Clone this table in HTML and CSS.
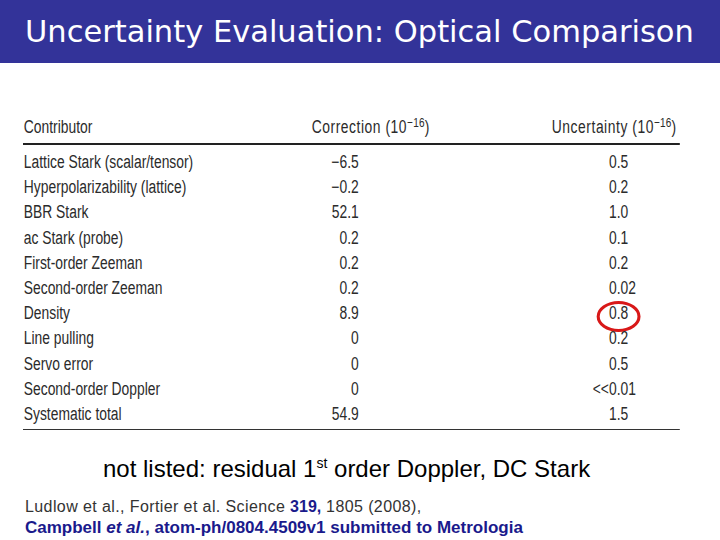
FILE: index.html
```html
<!DOCTYPE html>
<html>
<head>
<meta charset="utf-8">
<link rel="stylesheet" href="styles.css">
</head>
<body>
<header class="titlebar">
  <h1 class="title">Uncertainty Evaluation: Optical Comparison</h1>
</header>
<main class="content">
  <section class="table">
    <div class="row head">
      <div class="c1">Contributor</div>
      <div class="c2">Correction (10<sup>−16</sup>)</div>
      <div class="h3">Uncertainty (10<sup>−16</sup>)</div>
    </div>
    <div class="body">
      <div class="row"><div class="c1">Lattice Stark (scalar/tensor)</div><div class="c2"><span class="num">−6.5</span></div><div class="c3"><span class="ip">0</span><span class="fp">.5</span></div></div>
      <div class="row"><div class="c1">Hyperpolarizability (lattice)</div><div class="c2"><span class="num">−0.2</span></div><div class="c3"><span class="ip">0</span><span class="fp">.2</span></div></div>
      <div class="row"><div class="c1">BBR Stark</div><div class="c2"><span class="num">52.1</span></div><div class="c3"><span class="ip">1</span><span class="fp">.0</span></div></div>
      <div class="row"><div class="c1">ac Stark (probe)</div><div class="c2"><span class="num">0.2</span></div><div class="c3"><span class="ip">0</span><span class="fp">.1</span></div></div>
      <div class="row"><div class="c1">First-order Zeeman</div><div class="c2"><span class="num">0.2</span></div><div class="c3"><span class="ip">0</span><span class="fp">.2</span></div></div>
      <div class="row"><div class="c1">Second-order Zeeman</div><div class="c2"><span class="num">0.2</span></div><div class="c3"><span class="ip">0</span><span class="fp">.02</span></div></div>
      <div class="row"><div class="c1">Density</div><div class="c2"><span class="num">8.9</span></div><div class="c3"><span class="ip">0</span><span class="fp">.8</span><span class="circle"></span></div></div>
      <div class="row"><div class="c1">Line pulling</div><div class="c2"><span class="num">0</span></div><div class="c3"><span class="ip">0</span><span class="fp">.2</span></div></div>
      <div class="row"><div class="c1">Servo error</div><div class="c2"><span class="num">0</span></div><div class="c3"><span class="ip">0</span><span class="fp">.5</span></div></div>
      <div class="row"><div class="c1">Second-order Doppler</div><div class="c2"><span class="num">0</span></div><div class="c3"><span class="ip">&lt;&lt;0</span><span class="fp">.01</span></div></div>
      <div class="row"><div class="c1">Systematic total</div><div class="c2"><span class="num">54.9</span></div><div class="c3"><span class="ip">1</span><span class="fp">.5</span></div></div>
    </div>
  </section>
  <p class="note">not listed: residual 1<sup>st</sup> order Doppler, DC Stark</p>
  <p class="ref1">Ludlow et al., Fortier et al. Science <b class="navy">319,</b> 1805 (2008),</p>
  <p class="ref2">Campbell <i>et al.</i>, atom-ph/0804.4509v1 submitted to Metrologia</p>
</main>
</body>
</html>
```

FILE: styles.css
```css
* { box-sizing: border-box; }
html, body { margin: 0; padding: 0; background: #ffffff; }
body { width: 720px; height: 540px; overflow: hidden; font-family: "Liberation Sans", Arial, sans-serif; }

.titlebar {
  height: 63px;
  background: #333399;
  display: flex;
  align-items: center;
  padding-left: 25px;
}
.title {
  margin: 0;
  color: #ffffff;
  font-family: "DejaVu Sans", sans-serif;
  font-weight: normal;
  font-size: 30.5px;
  white-space: nowrap;
}

.content { padding-left: 23px; }

/* condensed typeface look: the table is set in Arial and narrowed */
.table {
  margin-top: 52px;
  width: 853px;
  transform: scaleX(0.77);
  transform-origin: 0 0;
  font-family: "Liberation Sans", Arial, sans-serif;
  font-size: 18px;
  color: #2b2b2b;
}
.row {
  display: grid;
  grid-template-columns: 375px 309px 169px;
  height: 25.2px;
  align-items: center;
  line-height: 25px;
}
.row.head {
  height: 24px;
  line-height: 24px;
  border-bottom: 2px solid #222;
  box-sizing: content-box;
  padding-bottom: 4px;
}
.c1 { padding-left: 1px; white-space: nowrap; }
.c2 { white-space: nowrap; }
.head .c2, .head .h3 { letter-spacing: 0.7px; }
.h3 { text-align: right; padding-right: 4px; white-space: nowrap; }
.head sup { font-size: 13px; vertical-align: 6px; line-height: 0; letter-spacing: 0.3px; }
.num { display: inline-block; width: 61px; text-align: right; }
.body {
  padding-top: 5px;
  padding-bottom: 2px;
  border-bottom: 1px solid #333;
  box-sizing: content-box;
}
.c3 { position: relative; display: flex; white-space: nowrap; }
.ip { display: inline-block; width: 87px; text-align: right; }
.fp { display: inline-block; }
.circle {
  position: absolute;
  left: 61px;
  top: 0px;
  width: 57px;
  height: 31px;
  border-style: solid;
  border-color: #d81818;
  border-width: 3px 4px;
  border-radius: 50%;
}

.note {
  margin: 26px 0 0 80px;
  font-size: 24px;
  color: #000;
  line-height: 26px;
}
.note sup { font-size: 14px; vertical-align: 9px; line-height: 0; }
.ref1 {
  margin: 16px 0 0 2px;
  font-size: 16px;
  letter-spacing: 0.4px;
  color: #333;
  line-height: 18px;
}
.navy { color: #1a1a8c; letter-spacing: 0; }
.ref2 {
  margin: 2px 0 0 2px;
  font-size: 17px;
  font-weight: bold;
  color: #1a1a8c;
  line-height: 19px;
}
```
